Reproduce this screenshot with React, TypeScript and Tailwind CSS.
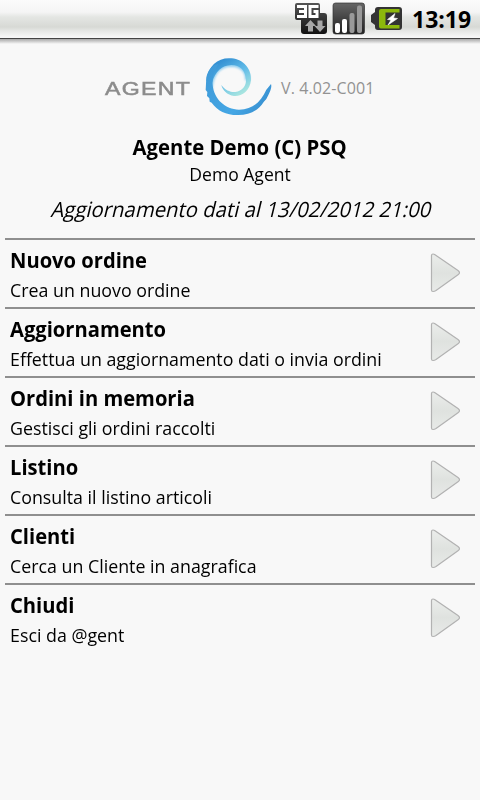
const menu = [
  { title: "Nuovo ordine", text: "Crea un nuovo ordine" },
  { title: "Aggiornamento", text: "Effettua un aggiornamento dati o invia ordini" },
  { title: "Ordini in memoria", text: "Gestisci gli ordini raccolti" },
  { title: "Listino", text: "Consulta il listino articoli" },
  { title: "Clienti", text: "Cerca un Cliente in anagrafica" },
  { title: "Chiudi", text: "Esci da @gent" },
];

function NetworkIcon() {
  return (
    <svg width="34" height="34" viewBox="0 0 34 34">
      <defs>
        <linearGradient id="net" x1="0" y1="0" x2="0" y2="1">
          <stop offset="0" stopColor="#555" />
          <stop offset="1" stopColor="#111" />
        </linearGradient>
      </defs>
      <path d="M3 1H24Q26 1 26 3V11H30Q33 11 33 14V29Q33 32 30 32H10Q7 32 7 29V18H3Q1 18 1 16V3Q1 1 3 1Z" fill="url(#net)" />
      <path d="M3 4.500H11.500V14.500H3M5 9.500H11.500" fill="none" stroke="#fff" strokeWidth="3" />
      <path d="M24.500 4.500H16V14.500H23V9.500H19.500" fill="none" stroke="#fff" strokeWidth="3" />
      <path d="M16.500 18L22 24H19V29.500H14V24H11Z" fill="#a8a8a8" />
      <path d="M23.500 18.500H28.500V24H31.500L26 30L20.500 24H23.500Z" fill="#a8a8a8" />
    </svg>
  );
}

function SignalIcon() {
  return (
    <svg width="34" height="34" viewBox="0 0 34 34">
      <defs>
        <linearGradient id="sig" x1="0" y1="0" x2="0" y2="1">
          <stop offset="0" stopColor="#666" />
          <stop offset="1" stopColor="#202020" />
        </linearGradient>
      </defs>
      <rect x="1" y="1" width="31.500" height="31" rx="2.500" fill="url(#sig)" stroke="#333" strokeWidth=".7" />
      <rect x="3" y="21" width="5" height="10" rx="2" fill="#fff" />
      <rect x="10" y="17" width="5" height="14" rx="2" fill="#fff" />
      <rect x="17.500" y="11" width="5" height="20" rx="2" fill="#999" />
      <rect x="25" y="3.500" width="5" height="27.500" rx="2" fill="#999" />
    </svg>
  );
}

function BatteryIcon() {
  return (
    <svg width="34" height="26" viewBox="0 0 34 26">
      <path d="M8 1H29Q32 1 32 4V21Q32 24 29 24H8Q5 24 5 21V19L1 16V9L5 6V4Q5 1 8 1Z" fill="#333" />
      <path d="M11 3H29.500V6.500H15.500V19H29.500V22.500H11Q9 22.500 9 20.500V5Q9 3 11 3Z" fill="#8cb80c" />
      <path d="M25 7.500L17.500 13.500L21 14L18 19L27.500 12.500L23.500 12Z" fill="#fff" stroke="#fff" strokeWidth=".6" />
    </svg>
  );
}

function Swirl() {
  return (
    <svg className="w-[85px] h-[75px]" viewBox="0 0 255 225">
      <defs>
        <linearGradient id="swirl" gradientUnits="userSpaceOnUse" x1="70" y1="40" x2="130" y2="135">
          <stop offset="0" stopColor="#3592d4" />
          <stop offset=".5" stopColor="#62bce8" />
          <stop offset="1" stopColor="#a6e4e0" />
        </linearGradient>
        <linearGradient id="tail" gradientUnits="userSpaceOnUse" x1="40" y1="60" x2="220" y2="180">
          <stop offset="0" stopColor="#3f9ad8" />
          <stop offset=".6" stopColor="#45a7e5" />
          <stop offset="1" stopColor="#368ccd" />
        </linearGradient>
        <filter id="fade" x="-20%" y="-20%" width="140%" height="140%">
          <feGaussianBlur stdDeviation="3" />
        </filter>
      </defs>
      {/* pale wash along the inner edge */}
      <path d="M46 125C45 75 70 44 108 43C140 43 159 64 157 91" fill="none" stroke="#8fcdef" strokeWidth="14" filter="url(#fade)" />
      <path d="M34 92C39 45 72 21 110 25C146 28 170 58 168 90C165 124 139 140 117 138C96 135 83 121 79 105C91 121 106 127 121 126C142 124 154 108 153 88C150 61 136 45 109 45C80 46 61 65 51 98Z" fill="url(#swirl)" />
      <path d="M70 42C57 64 51 85 53 105C57 148 91 178 132 179C176 178 198 153 214 119L228 102C232 112 223 130 214 147L206 156C191 181 162 196 127 195C93 195 67 182 50 158L44 155L43 145L36 138L37 126L32 120L34 82C39 61 50 45 70 42Z" fill="url(#tail)" />
    </svg>
  );
}

function Arrow() {
  return (
    <svg width="34" height="42" viewBox="0 0 34 42">
      <defs>
        <linearGradient id="arrow" x1="0" y1="0" x2="0" y2="1">
          <stop offset="0" stopColor="#ebedeb" />
          <stop offset=".5" stopColor="#dfe2df" />
          <stop offset="1" stopColor="#e8eae8" />
        </linearGradient>
      </defs>
      <path d="M2.500 3.500Q2.500 2 4 2Q5 2 6 2.700L29 18.500Q32 20.700 29 22.700L7 38.500Q5.500 39.500 4 39.500Q2.500 39.500 2.500 38Z" fill="url(#arrow)" stroke="#b2b2b2" strokeWidth="1.200" />
    </svg>
  );
}

export default function App() {
  return (
    <div className="w-[480px] h-[800px] overflow-hidden bg-[#f8f8f8] text-black font-['Open_Sans','Noto_Sans',sans-serif] whitespace-nowrap">
      <div className="flex h-[38px] pl-[294px] pt-[2px] bg-[linear-gradient(#fbfbfb_0px,#f5f5f5_12px,#e4e6e3_17px,#d7d9d5_27px,#e6e7e5_31px,#f7f7f7_37px)]">
        <NetworkIcon />
        <div className="ml-[4px]"><SignalIcon /></div>
        <div className="ml-[4px] mt-[4px]"><BatteryIcon /></div>
        <span className="ml-[8px] mt-[1px] text-[23px] leading-[32px] font-bold">13:19</span>
      </div>
      <div className="h-[6px] border-t border-[#444] bg-linear-to-b from-[#a8a8a8] to-[#f8f8f8]" />

      <div className="flex h-[81px] pt-[6px] pl-[105px]">
        <span className="w-[90px] pt-[27px] origin-left scale-x-[1.32] text-[17.500px] leading-[24px] tracking-[1px] text-[#8c8c8c] [-webkit-text-stroke:0.5px_#8c8c8c] font-['Liberation_Sans',sans-serif]">AGENT</span>
        <Swirl />
        <span className="pt-[26px] pl-[1px] text-[16px] leading-[24px] tracking-[0.1px] text-[#929292]">V. 4.02-C001</span>
      </div>

      <div className="flex flex-col items-center h-[113px] pt-[8px]">
        <h1 className="scale-x-[.968] text-[21px] leading-[28px] font-bold">Agente Demo (C) PSQ</h1>
        <p className="scale-x-[.975] text-[18px] leading-[26px]">Demo Agent</p>
        <div className="mt-[8px] scale-x-[.968] pl-[5px]">
          <p className="-skew-x-[14deg] text-[21px] leading-[28px]">Aggiornamento dati al 13/02/2012 21:00</p>
        </div>
      </div>

      <div className="px-[5px]">
        {menu.map((item) => (
          <div key={item.title} className="flex justify-between h-[69px] border-t-2 border-[#8f8f8f] pl-[5px] pr-[12px]">
            <div className="pt-[6px]">
              <h2 className="origin-left scale-x-[.96] text-[21px] leading-[28px] font-bold">{item.title}</h2>
              <p className="mt-[3px] origin-left scale-x-[.989] text-[18px] leading-[26px]">{item.text}</p>
            </div>
            <div className="pt-[12px]"><Arrow /></div>
          </div>
        ))}
      </div>
    </div>
  );
}
